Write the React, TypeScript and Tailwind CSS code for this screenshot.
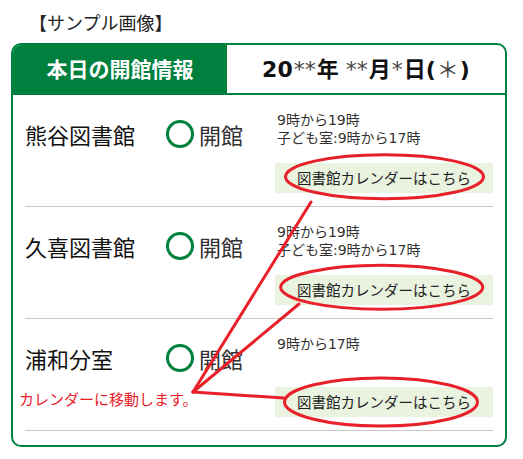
import React from "react";

const libraries = [
  { name: "熊谷図書館", hours: ["9時から19時", "子ども室:9時から17時"] },
  { name: "久喜図書館", hours: ["9時から19時", "子ども室:9時から17時"] },
  { name: "浦和分室", hours: ["9時から17時"] },
];

function Star({ children }: { children: React.ReactNode }) {
  return <span className="font-normal text-[#444] px-px">{children}</span>;
}

export default function App() {
  return (
    <div className="relative w-[523px] h-[459px] bg-white font-['Noto_Sans_CJK_JP',sans-serif] text-[#222]">
      <p className="pt-[10px] pl-[29px] text-[18px] leading-[24px]">【サンプル画像】</p>

      <div className="mt-[9px] ml-[11px] w-[496px] rounded-[10px] border-2 border-[#00803f] overflow-hidden">
        <div className="flex h-[50px] border-b-2 border-[#00803f]">
          <div className="w-[214px] bg-[#00803f] flex items-center justify-center text-white font-bold text-[21px]">
            本日の開館情報
          </div>
          <div className="flex-1 flex items-center justify-center font-bold text-[22px] text-[#111] font-['DejaVu_Sans','Noto_Sans_CJK_JP',sans-serif]">
            <span>20</span>
            <Star>**</Star>
            <span>年</span>
            <Star>
              <span className="ml-[6px]">**</span>
            </Star>
            <span>月</span>
            <Star>*</Star>
            <span>日(</span>
            <Star>＊</Star>
            <span>)</span>
          </div>
        </div>

        <div className="px-3 pb-[14px]">
          {libraries.map((lib) => (
            <div key={lib.name} className="flex h-[112px] border-b border-[#c8c8c8]">
              <div className="w-[250px] pt-6 flex items-center self-start">
                <span className="w-[141px] text-[22px] leading-[30px] text-[#111]">{lib.name}</span>
                <span className="w-7 h-7 rounded-full border-[3.5px] border-[#00803f]" />
                <span className="ml-[5px] text-[22px] leading-[30px] text-[#333]">開館</span>
              </div>
              <div className="w-[218px] pt-4">
                <div className="h-[36px] pl-[2px] text-[14px] leading-[18px] text-[#333] font-['DejaVu_Sans','Noto_Sans_CJK_JP',sans-serif]">
                  {lib.hours.map((h) => (
                    <div key={h}>{h}</div>
                  ))}
                </div>
                <div className="mt-4 h-[30px] bg-[#eaf3e0] flex items-center justify-center text-[14.5px] text-[#222]">
                  図書館カレンダーはこちら
                </div>
              </div>
            </div>
          ))}
        </div>
      </div>

      <svg
        className="absolute inset-0 w-full h-full pointer-events-none"
        viewBox="0 0 523 459"
        fill="none"
        stroke="#e8202a"
        strokeWidth="3"
        strokeLinecap="round"
      >
        <ellipse cx="384.5" cy="176.7" rx="99" ry="22" />
        <ellipse cx="381.7" cy="287.3" rx="101" ry="22" />
        <ellipse cx="381" cy="402" rx="96.5" ry="24" />
        <path d="M311 202 L193 392" />
        <path d="M299 304 L193 392" />
        <path d="M193 392 L284 398" />
      </svg>

      <span className="absolute left-[19px] top-[390px] text-[15px] leading-[18px] text-[#e8202a]">
        カレンダーに移動します。
      </span>
    </div>
  );
}
